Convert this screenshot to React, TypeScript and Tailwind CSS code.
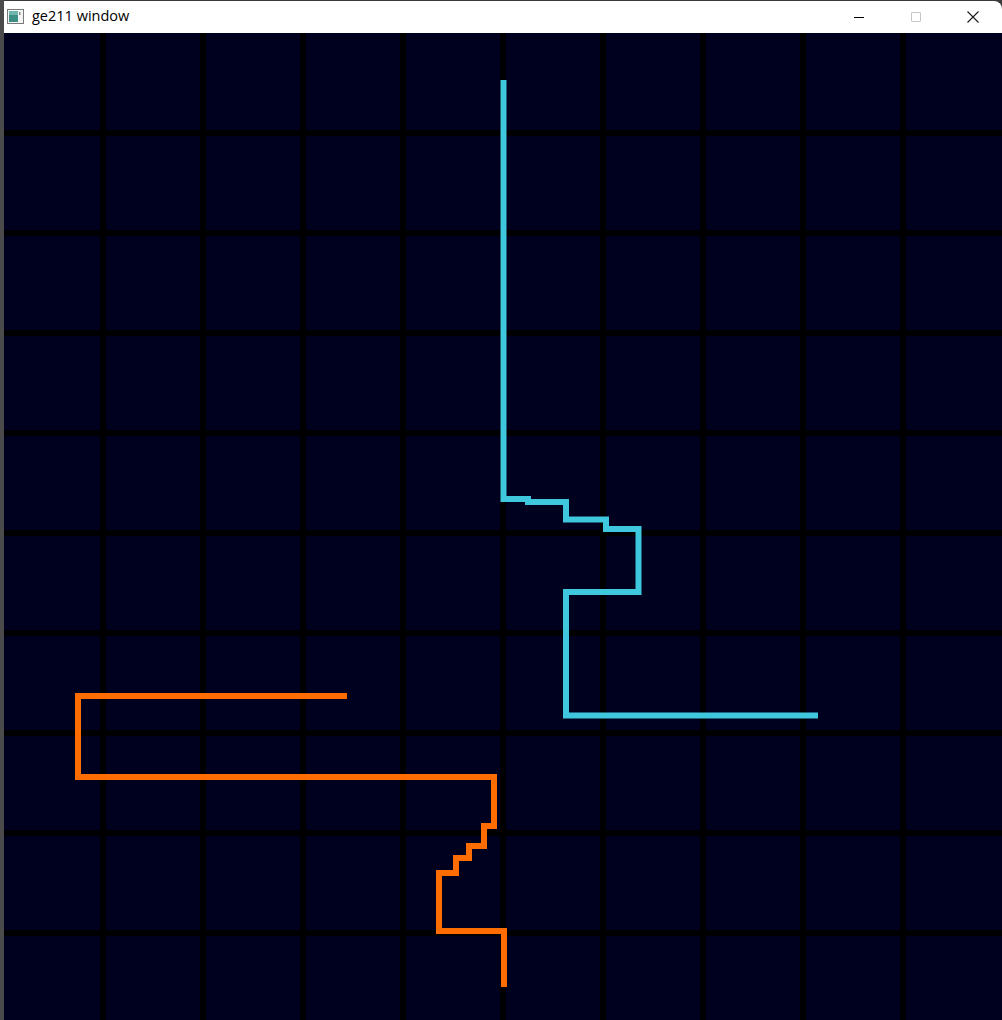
import React from "react";

const cyanPath = "M503.5,80 V499 H528 V502 H566 V519.5 H606 V529 H638.5 V592 H566 V715.5 H818";
const orangePath = "M347,696 H78 V777 H494 V826 H484 V846 H469 V858 H456 V873 H439 V931 H504 V987";

function WindowIcon() {
  return (
    <svg width="17" height="15" viewBox="0 0 17 15">
      <rect x="0.5" y="0.5" width="16" height="14" fill="#f4f4f4" stroke="#7a7a7a" />
      <rect x="2" y="2" width="9" height="11" fill="#3d8f86" />
      <rect x="2" y="2" width="9" height="4" fill="#6fb7ae" />
      <rect x="12" y="3" width="1.5" height="3" fill="#8a8a8a" />
    </svg>
  );
}

function TitleBar() {
  return (
    <div className="h-[32px] flex items-center bg-white rounded-tr-[8px] select-none">
      <div className="pl-[3px] pr-[8px] flex items-center pb-[1px]">
        <WindowIcon />
      </div>
      <span className="text-[14.5px] text-black font-['Open_Sans',sans-serif] leading-none pb-[2px]">ge211 window</span>
      <div className="ml-auto flex h-full items-center pr-[1px]">
        <div className="w-[57px] h-full flex items-center justify-center">
          <div className="w-[10px] h-[1px] bg-black" />
        </div>
        <div className="w-[57px] h-full flex items-center justify-center">
          <div className="w-[10px] h-[10px] border border-[#c6c6c6] rounded-[1px]" />
        </div>
        <div className="w-[57px] h-full flex items-center justify-center">
          <svg width="12" height="12" viewBox="0 0 12 12">
            <path d="M0.5,0.5 L11.5,11.5 M11.5,0.5 L0.5,11.5" stroke="#1a1a1a" strokeWidth="1.1" />
          </svg>
        </div>
      </div>
    </div>
  );
}

export default function App() {
  const cells = Array.from({ length: 100 }, (_, i) => i);
  return (
    <div className="w-[1002px] h-[1020px] overflow-hidden flex bg-[#3a3a3a]">
      <div className="w-[4px] shrink-0 bg-[#4b4b4b]" />
      <div className="flex-1 flex flex-col pt-[1px]">
        <TitleBar />
        <div className="relative flex-1 bg-black">
          <div className="grid grid-cols-[96px_repeat(8,94px)_96px] grid-rows-[97px_repeat(8,94px)_84px] gap-[6px]">
            {cells.map((c) => (
              <div key={c} className="bg-[#00001f]" />
            ))}
          </div>
          <svg className="absolute inset-0" width="998" height="987" viewBox="4 33 998 987">
            <path d={cyanPath} fill="none" stroke="#3fc8dd" strokeWidth="6" strokeLinejoin="miter" strokeLinecap="butt" />
            <path d={orangePath} fill="none" stroke="#ff6c00" strokeWidth="6" strokeLinejoin="miter" strokeLinecap="butt" />
          </svg>
        </div>
      </div>
    </div>
  );
}
